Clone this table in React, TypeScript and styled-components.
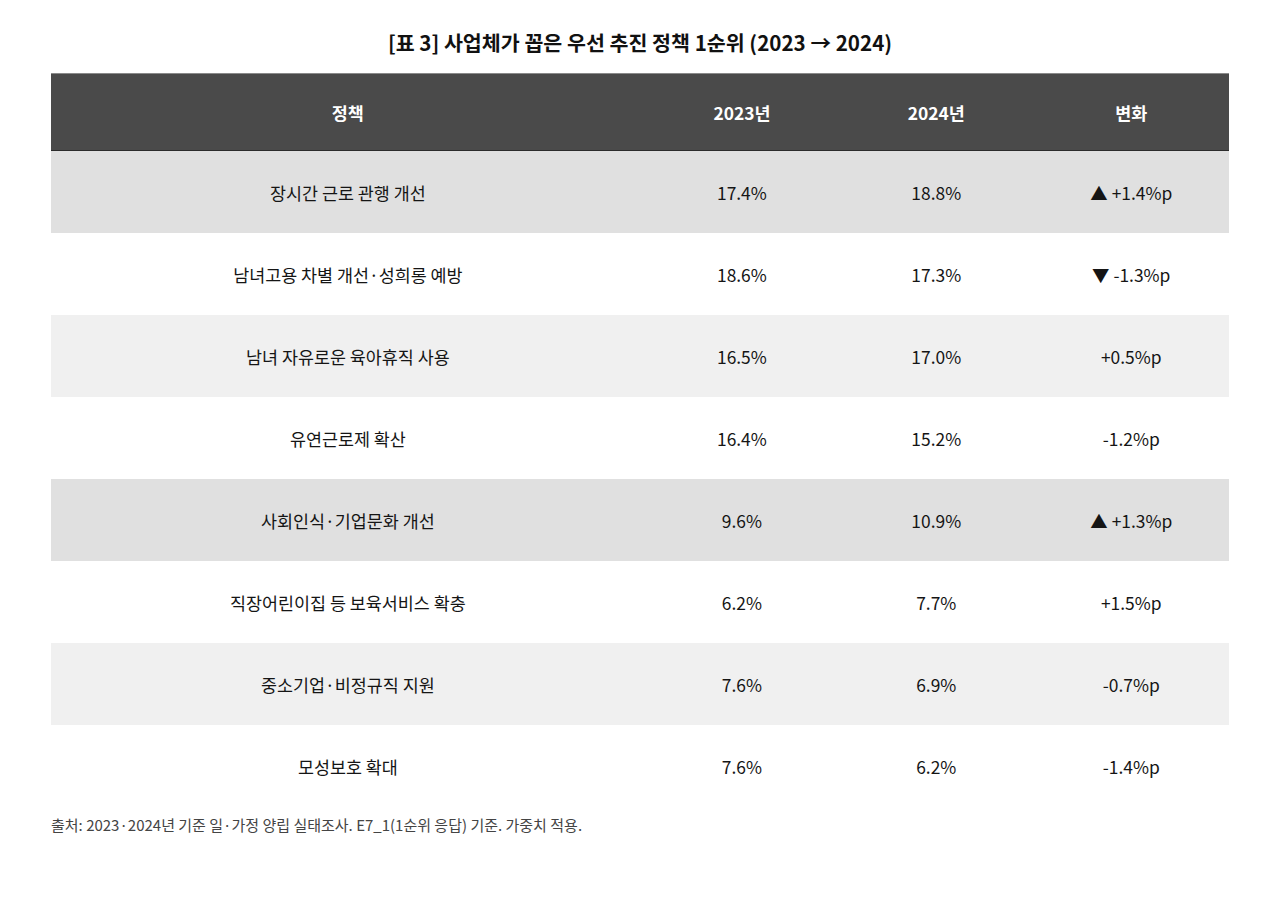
import React from "react";
import styled, { createGlobalStyle } from "styled-components";

const GlobalStyle = createGlobalStyle`
  html, body { margin: 0; padding: 0; background: #ffffff; }
  body {
    font-family: "Noto Sans CJK KR", "Noto Sans", sans-serif;
    color: #111111;
  }
`;

const Page = styled.div`
  padding: 28px 51px 40px;
`;

const Title = styled.h2`
  margin: 0 0 17px;
  text-align: center;
  font-size: 20.6px;
  line-height: 28px;
  font-weight: 700;
  color: #111111;
`;

const Table = styled.table`
  width: 100%;
  border-collapse: collapse;
  table-layout: fixed;
`;

const HeadRow = styled.tr`
  background: #4a4a4a;
  border-top: 1px solid #8a8a8a;
  border-bottom: 1px solid #2c2c2c;
`;

const HeadCell = styled.th<{ $w: string }>`
  width: ${(p) => p.$w};
  height: 76px;
  padding: 0;
  text-align: center;
  color: #ffffff;
  font-size: 17.4px;
  font-weight: 700;
`;

type Tone = "strong" | "light" | "plain";

const BodyRow = styled.tr<{ $tone: Tone }>`
  background: ${(p) =>
    p.$tone === "strong" ? "#e0e0e0" : p.$tone === "light" ? "#f0f0f0" : "#ffffff"};
`;

const Cell = styled.td`
  height: 82px;
  padding: 0;
  text-align: center;
  font-size: 17.4px;
  color: #151515;
`;

const Mark = styled.span`
  margin-right: 4px;
`;

const Source = styled.p`
  margin: 8px 0 0;
  font-size: 15px;
  line-height: 20px;
  color: #444444;
`;

type Row = { name: string; a: string; b: string; change: string; dir?: "up" | "down"; tone: Tone };

const rows: Row[] = [
  { name: "장시간 근로 관행 개선", a: "17.4%", b: "18.8%", change: "+1.4%p", dir: "up", tone: "strong" },
  { name: "남녀고용 차별 개선·성희롱 예방", a: "18.6%", b: "17.3%", change: "-1.3%p", dir: "down", tone: "plain" },
  { name: "남녀 자유로운 육아휴직 사용", a: "16.5%", b: "17.0%", change: "+0.5%p", tone: "light" },
  { name: "유연근로제 확산", a: "16.4%", b: "15.2%", change: "-1.2%p", tone: "plain" },
  { name: "사회인식·기업문화 개선", a: "9.6%", b: "10.9%", change: "+1.3%p", dir: "up", tone: "strong" },
  { name: "직장어린이집 등 보육서비스 확충", a: "6.2%", b: "7.7%", change: "+1.5%p", tone: "plain" },
  { name: "중소기업·비정규직 지원", a: "7.6%", b: "6.9%", change: "-0.7%p", tone: "light" },
  { name: "모성보호 확대", a: "7.6%", b: "6.2%", change: "-1.4%p", tone: "plain" },
];

export default function App() {
  return (
    <>
      <GlobalStyle />
      <Page>
        <Title>[표 3] 사업체가 꼽은 우선 추진 정책 1순위 (2023 → 2024)</Title>
        <Table>
          <thead>
            <HeadRow>
              <HeadCell $w="50.4%">정책</HeadCell>
              <HeadCell $w="16.5%">2023년</HeadCell>
              <HeadCell $w="16.5%">2024년</HeadCell>
              <HeadCell $w="16.6%">변화</HeadCell>
            </HeadRow>
          </thead>
          <tbody>
            {rows.map((r) => (
              <BodyRow key={r.name} $tone={r.tone}>
                <Cell>{r.name}</Cell>
                <Cell>{r.a}</Cell>
                <Cell>{r.b}</Cell>
                <Cell>
                  {r.dir === "up" && <Mark>▲</Mark>}
                  {r.dir === "down" && <Mark>▼</Mark>}
                  {r.change}
                </Cell>
              </BodyRow>
            ))}
          </tbody>
        </Table>
        <Source>출처: 2023·2024년 기준 일·가정 양립 실태조사. E7_1(1순위 응답) 기준. 가중치 적용.</Source>
      </Page>
    </>
  );
}
